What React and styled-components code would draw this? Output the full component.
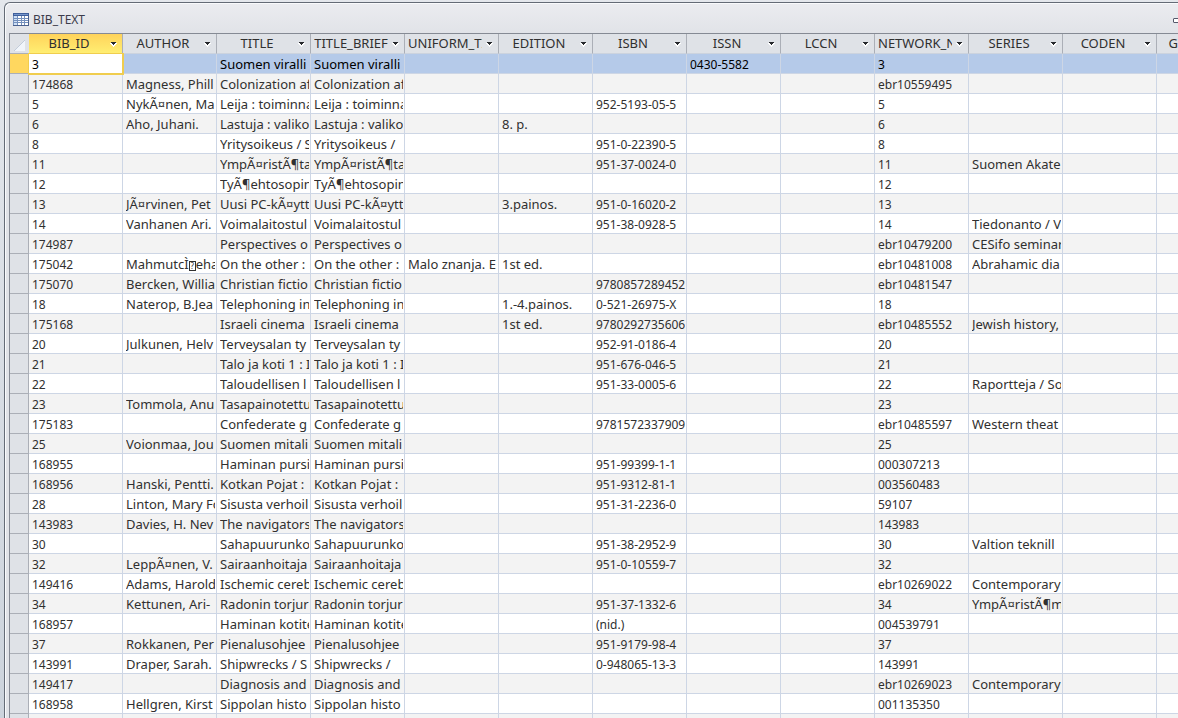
import React from 'react';
import styled, { createGlobalStyle, css } from 'styled-components';

const columns = [
  { name: 'BIB_ID', numeric: true },
  { name: 'AUTHOR' },
  { name: 'TITLE' },
  { name: 'TITLE_BRIEF' },
  { name: 'UNIFORM_TI' },
  { name: 'EDITION' },
  { name: 'ISBN', numeric: true },
  { name: 'ISSN', numeric: true },
  { name: 'LCCN' },
  { name: 'NETWORK_N', numeric: true },
  { name: 'SERIES' },
  { name: 'CODEN' },
  { name: 'GENERAL' },
];

// id, author, title, title brief, network number, then the rarer fields
const records = [
  ['3', '', 'Suomen viralli', 'Suomen viralli', '3', { ISSN: '0430-5582' }],
  ['174868', 'Magness, Phill', 'Colonization af', 'Colonization af', 'ebr10559495'],
  ['5', 'NykÃ¤nen, Ma', 'Leija : toiminna', 'Leija : toiminna', '5', { ISBN: '952-5193-05-5' }],
  ['6', 'Aho, Juhani.', 'Lastuja : valiko', 'Lastuja : valiko', '6', { EDITION: '8. p.' }],
  ['8', '', 'Yritysoikeus / S', 'Yritysoikeus /', '8', { ISBN: '951-0-22390-5' }],
  ['11', '', 'YmpÃ¤ristÃ¶ta', 'YmpÃ¤ristÃ¶ta', '11', { ISBN: '951-37-0024-0', SERIES: 'Suomen Akate' }],
  ['12', '', 'TyÃ¶ehtosopin', 'TyÃ¶ehtosopin', '12'],
  ['13', 'JÃ¤rvinen, Pet', 'Uusi PC-kÃ¤ytt', 'Uusi PC-kÃ¤ytt', '13', { EDITION: '3.painos.', ISBN: '951-0-16020-2' }],
  ['14', 'Vanhanen Ari.', 'Voimalaitostul', 'Voimalaitostul', '14', { ISBN: '951-38-0928-5', SERIES: 'Tiedonanto / V' }],
  ['174987', '', 'Perspectives o', 'Perspectives o', 'ebr10479200', { SERIES: 'CESifo seminar' }],
  ['175042', 'MahmutcÌ\uFFFDeha', 'On the other :', 'On the other :', 'ebr10481008', { UNIFORM_TI: 'Malo znanja. E', EDITION: '1st ed.', SERIES: 'Abrahamic dia' }],
  ['175070', 'Bercken, Willia', 'Christian fictio', 'Christian fictio', 'ebr10481547', { ISBN: '9780857289452' }],
  ['18', 'Naterop, B.Jea', 'Telephoning in', 'Telephoning in', '18', { EDITION: '1.-4.painos.', ISBN: '0-521-26975-X' }],
  ['175168', '', 'Israeli cinema', 'Israeli cinema', 'ebr10485552', { EDITION: '1st ed.', ISBN: '9780292735606', SERIES: 'Jewish history,' }],
  ['20', 'Julkunen, Helv', 'Terveysalan ty', 'Terveysalan ty', '20', { ISBN: '952-91-0186-4' }],
  ['21', '', 'Talo ja koti 1 : I', 'Talo ja koti 1 : I', '21', { ISBN: '951-676-046-5' }],
  ['22', '', 'Taloudellisen l', 'Taloudellisen l', '22', { ISBN: '951-33-0005-6', SERIES: 'Raportteja / So' }],
  ['23', 'Tommola, Anu', 'Tasapainotettu', 'Tasapainotettu', '23'],
  ['175183', '', 'Confederate g', 'Confederate g', 'ebr10485597', { ISBN: '9781572337909', SERIES: 'Western theat' }],
  ['25', 'Voionmaa, Jou', 'Suomen mitali', 'Suomen mitali', '25'],
  ['168955', '', 'Haminan pursi', 'Haminan pursi', '000307213', { ISBN: '951-99399-1-1' }],
  ['168956', 'Hanski, Pentti.', 'Kotkan Pojat :', 'Kotkan Pojat :', '003560483', { ISBN: '951-9312-81-1' }],
  ['28', 'Linton, Mary Fo', 'Sisusta verhoil', 'Sisusta verhoil', '59107', { ISBN: '951-31-2236-0' }],
  ['143983', 'Davies, H. Nev', 'The navigators', 'The navigators', '143983'],
  ['30', '', 'Sahapuurunko', 'Sahapuurunko', '30', { ISBN: '951-38-2952-9', SERIES: 'Valtion teknill' }],
  ['32', 'LeppÃ¤nen, V.', 'Sairaanhoitaja', 'Sairaanhoitaja', '32', { ISBN: '951-0-10559-7' }],
  ['149416', 'Adams, Harold', 'Ischemic cereb', 'Ischemic cereb', 'ebr10269022', { SERIES: 'Contemporary' }],
  ['34', 'Kettunen, Ari-', 'Radonin torjur', 'Radonin torjur', '34', { ISBN: '951-37-1332-6', SERIES: 'YmpÃ¤ristÃ¶m' }],
  ['168957', '', 'Haminan kotite', 'Haminan kotite', '004539791', { ISBN: '(nid.)' }],
  ['37', 'Rokkanen, Per', 'Pienalusohjee', 'Pienalusohjee', '37', { ISBN: '951-9179-98-4' }],
  ['143991', 'Draper, Sarah.', 'Shipwrecks / S', 'Shipwrecks /', '143991', { ISBN: '0-948065-13-3' }],
  ['149417', '', 'Diagnosis and', 'Diagnosis and', 'ebr10269023', { SERIES: 'Contemporary' }],
  ['168958', 'Hellgren, Kirst', 'Sippolan histo', 'Sippolan histo', '001135350'],
  ['', '', '', '', ''],
].map(([id, author, title, brief, network, rest]) => ({
  BIB_ID: id,
  AUTHOR: author,
  TITLE: title,
  TITLE_BRIEF: brief,
  NETWORK_N: network,
  ...rest,
}));

function TableIcon() {
  return (
    <svg width="16" height="13" viewBox="0 0 16 13" shapeRendering="crispEdges" aria-hidden="true">
      <rect width="16" height="13" fill="#7490bd" />
      <path d="M0 0h16v3H0z" fill="#3f5f9c" />
      <path d="M1 1h14v1H1z" fill="#7696cb" />
      <path d="M1 3h3v2H1zM1 6h3v1H1zM1 8h3v1H1zM1 10h3v2H1z" fill="#cfe0f6" />
      <path
        d="M5 3h3v2H5zM9 3h2v2H9zM12 3h3v2h-3zM5 6h3v1H5zM9 6h2v1H9zM12 6h3v1h-3zM5 8h3v1H5zM9 8h2v1H9zM12 8h3v1h-3zM5 10h3v2H5zM9 10h2v2H9zM12 10h3v2h-3z"
        fill="#ffffff"
      />
      <path d="M15 3h1v10H0v-1h15z" fill="#4a618f" />
    </svg>
  );
}

function ColumnHeader({ name, active }) {
  return (
    <HeaderCell scope="col" $active={active}>
      <HeaderInner>
        <HeaderName>{name}</HeaderName>
        <ArrowButton type="button" aria-label={`Sort or filter ${name}`}>
          <svg width="7" height="5" viewBox="0 0 7 5" shapeRendering="crispEdges" aria-hidden="true">
            <path d="M0 1h7L4 5H3z" fill="#ffffff" />
            <path d="M1 0h5v1H1zM2 1h3v1H2zM3 2h1v1H3z" fill="#26282c" />
          </svg>
        </ArrowButton>
      </HeaderInner>
    </HeaderCell>
  );
}

// characters that could not be decoded are shown as a boxed question mark
function FieldValue({ value = '' }) {
  const parts = value.split('\uFFFD');
  return parts.map((part, idx) => (
    <React.Fragment key={idx}>
      {idx > 0 && <UnknownChar>?</UnknownChar>}
      {part}
    </React.Fragment>
  ));
}

function App() {
  return (
    <>
      <GlobalStyle />
      <Workspace>
        <Window>
          <TitleBar>
            <TableIcon />
            <WindowTitle>BIB_TEXT</WindowTitle>
            <MinimizeButton type="button" aria-label="Minimize" />
          </TitleBar>
          <SheetArea>
            <Sheet>
              <thead>
                <tr>
                  <Corner>
                    <svg width="11" height="11" viewBox="0 0 11 11" aria-hidden="true">
                      <path d="M11 0v11H0z" fill="#f1f5fa" />
                      <path d="M0 11L11 0" stroke="#c2ccda" />
                    </svg>
                  </Corner>
                  {columns.map(({ name }, idx) => (
                    <ColumnHeader key={name} name={name} active={idx === 0} />
                  ))}
                </tr>
              </thead>
              <tbody>
                {records.map((record, idx) => (
                  <Row key={idx} $selected={idx === 0}>
                    <Selector $selected={idx === 0} />
                    {columns.map(({ name, numeric }, col) => (
                      <Cell key={name} $current={idx === 0 && col === 0}>
                        <CellText $numeric={numeric}>
                          <FieldValue value={record[name]} />
                        </CellText>
                      </Cell>
                    ))}
                  </Row>
                ))}
              </tbody>
            </Sheet>
          </SheetArea>
        </Window>
      </Workspace>
    </>
  );
}

const GlobalStyle = createGlobalStyle`
  body {
    margin: 0;
    font-family: 'Noto Sans', sans-serif;
    font-size: 13px;
    color: #303030;
  }
  * {
    box-sizing: border-box;
  }
`;

const Workspace = styled.div`
  height: 100vh;
  overflow: hidden;
  padding: 2px 0 0 4px;
  background: linear-gradient(#e4e7ec, #ccd3dc);
`;

const Window = styled.section`
  height: 100%;
  display: flex;
  flex-direction: column;
  padding-left: 4px;
  border: solid #646b76;
  border-width: 1px 0 0 1px;
  border-top-left-radius: 6px;
  background: linear-gradient(#ebecf0, #e1e3e8 30px);
  box-shadow: inset 1px 1px #f9fafc;
`;

const TitleBar = styled.header`
  flex: none;
  display: flex;
  align-items: center;
  gap: 4px;
  height: 30px;
  padding: 2px 0 0 4px;
`;

const WindowTitle = styled.h1`
  margin: 0;
  font-size: 12px;
  font-weight: 400;
  color: #3b3b4b;
`;

const MinimizeButton = styled.button`
  width: 10px;
  height: 5px;
  margin: 3px -5px 0 auto;
  padding: 0;
  border: 1px solid #55596b;
  border-radius: 1px;
  background: #ffffff;
`;

const SheetArea = styled.div`
  flex: 1;
  overflow: hidden;
  border: solid #858a94;
  border-width: 1px 0 0 1px;
  background: #ffffff;
`;

const Sheet = styled.table`
  border-collapse: separate;
  border-spacing: 0;
`;

const Corner = styled.td`
  height: 20px;
  padding: 0 3px 2px 4px;
  line-height: 0;
  vertical-align: bottom;
  border: solid #abafb7;
  border-width: 0 1px 1px 0;
  border-right-color: #dfe2e7;
  background: #dfe2e7;
`;

const HeaderCell = styled.th`
  height: 20px;
  padding: 0;
  font-weight: 400;
  border: solid #abafb7;
  border-width: 0 1px 1px 0;
  border-bottom-color: #ccd3de;
  background: ${(props) =>
    props.$active ? 'linear-gradient(#ffd35b, #ffee72)' : '#dfe2e7'};
`;

const HeaderInner = styled.div`
  display: flex;
  align-items: center;
  width: 93px;
  padding: 0 5px 0 3px;
`;

const HeaderName = styled.span`
  flex: 1;
  display: flex;
  justify-content: safe center;
  min-width: 0;
  overflow: hidden;
  white-space: nowrap;
  line-height: 19px;
`;

const ArrowButton = styled.button`
  display: flex;
  flex: none;
  padding: 2px 0 0 4px;
  border: 0;
  background: none;
`;

const Row = styled.tr`
  background: ${(props) => (props.$selected ? '#b5cae9' : '#ffffff')};
  color: ${(props) => (props.$selected ? '#000000' : 'inherit')};

  &:nth-child(even) {
    background: #f3f3f3;
  }
`;

const Selector = styled.td`
  width: 19px;
  height: 20px;
  padding: 0;
  border: solid #abafb7;
  border-width: 0 1px 1px 0;
  background: ${(props) => (props.$selected ? '#ffd75f' : '#dfe2e7')};
`;

const Cell = styled.td`
  height: 20px;
  padding: 0 1px 0 3px;
  border: solid #cdd6e5;
  border-width: 0 1px 1px 0;
  ${(props) =>
    props.$current &&
    css`
      border-color: #f0cd4e;
      background: #ffffff;
      outline: 1px solid #f0cd4e;
    `}
`;

const CellText = styled.div`
  width: 89px;
  height: 19px;
  overflow: hidden;
  white-space: nowrap;
  font-size: ${(props) => (props.$numeric ? '12px' : '13px')};
  line-height: 21px;
`;

const UnknownChar = styled.span`
  display: inline-block;
  width: 7px;
  height: 10px;
  border: 1px solid #303030;
  font-size: 8px;
  line-height: 8px;
  text-align: center;
`;

export default App;
